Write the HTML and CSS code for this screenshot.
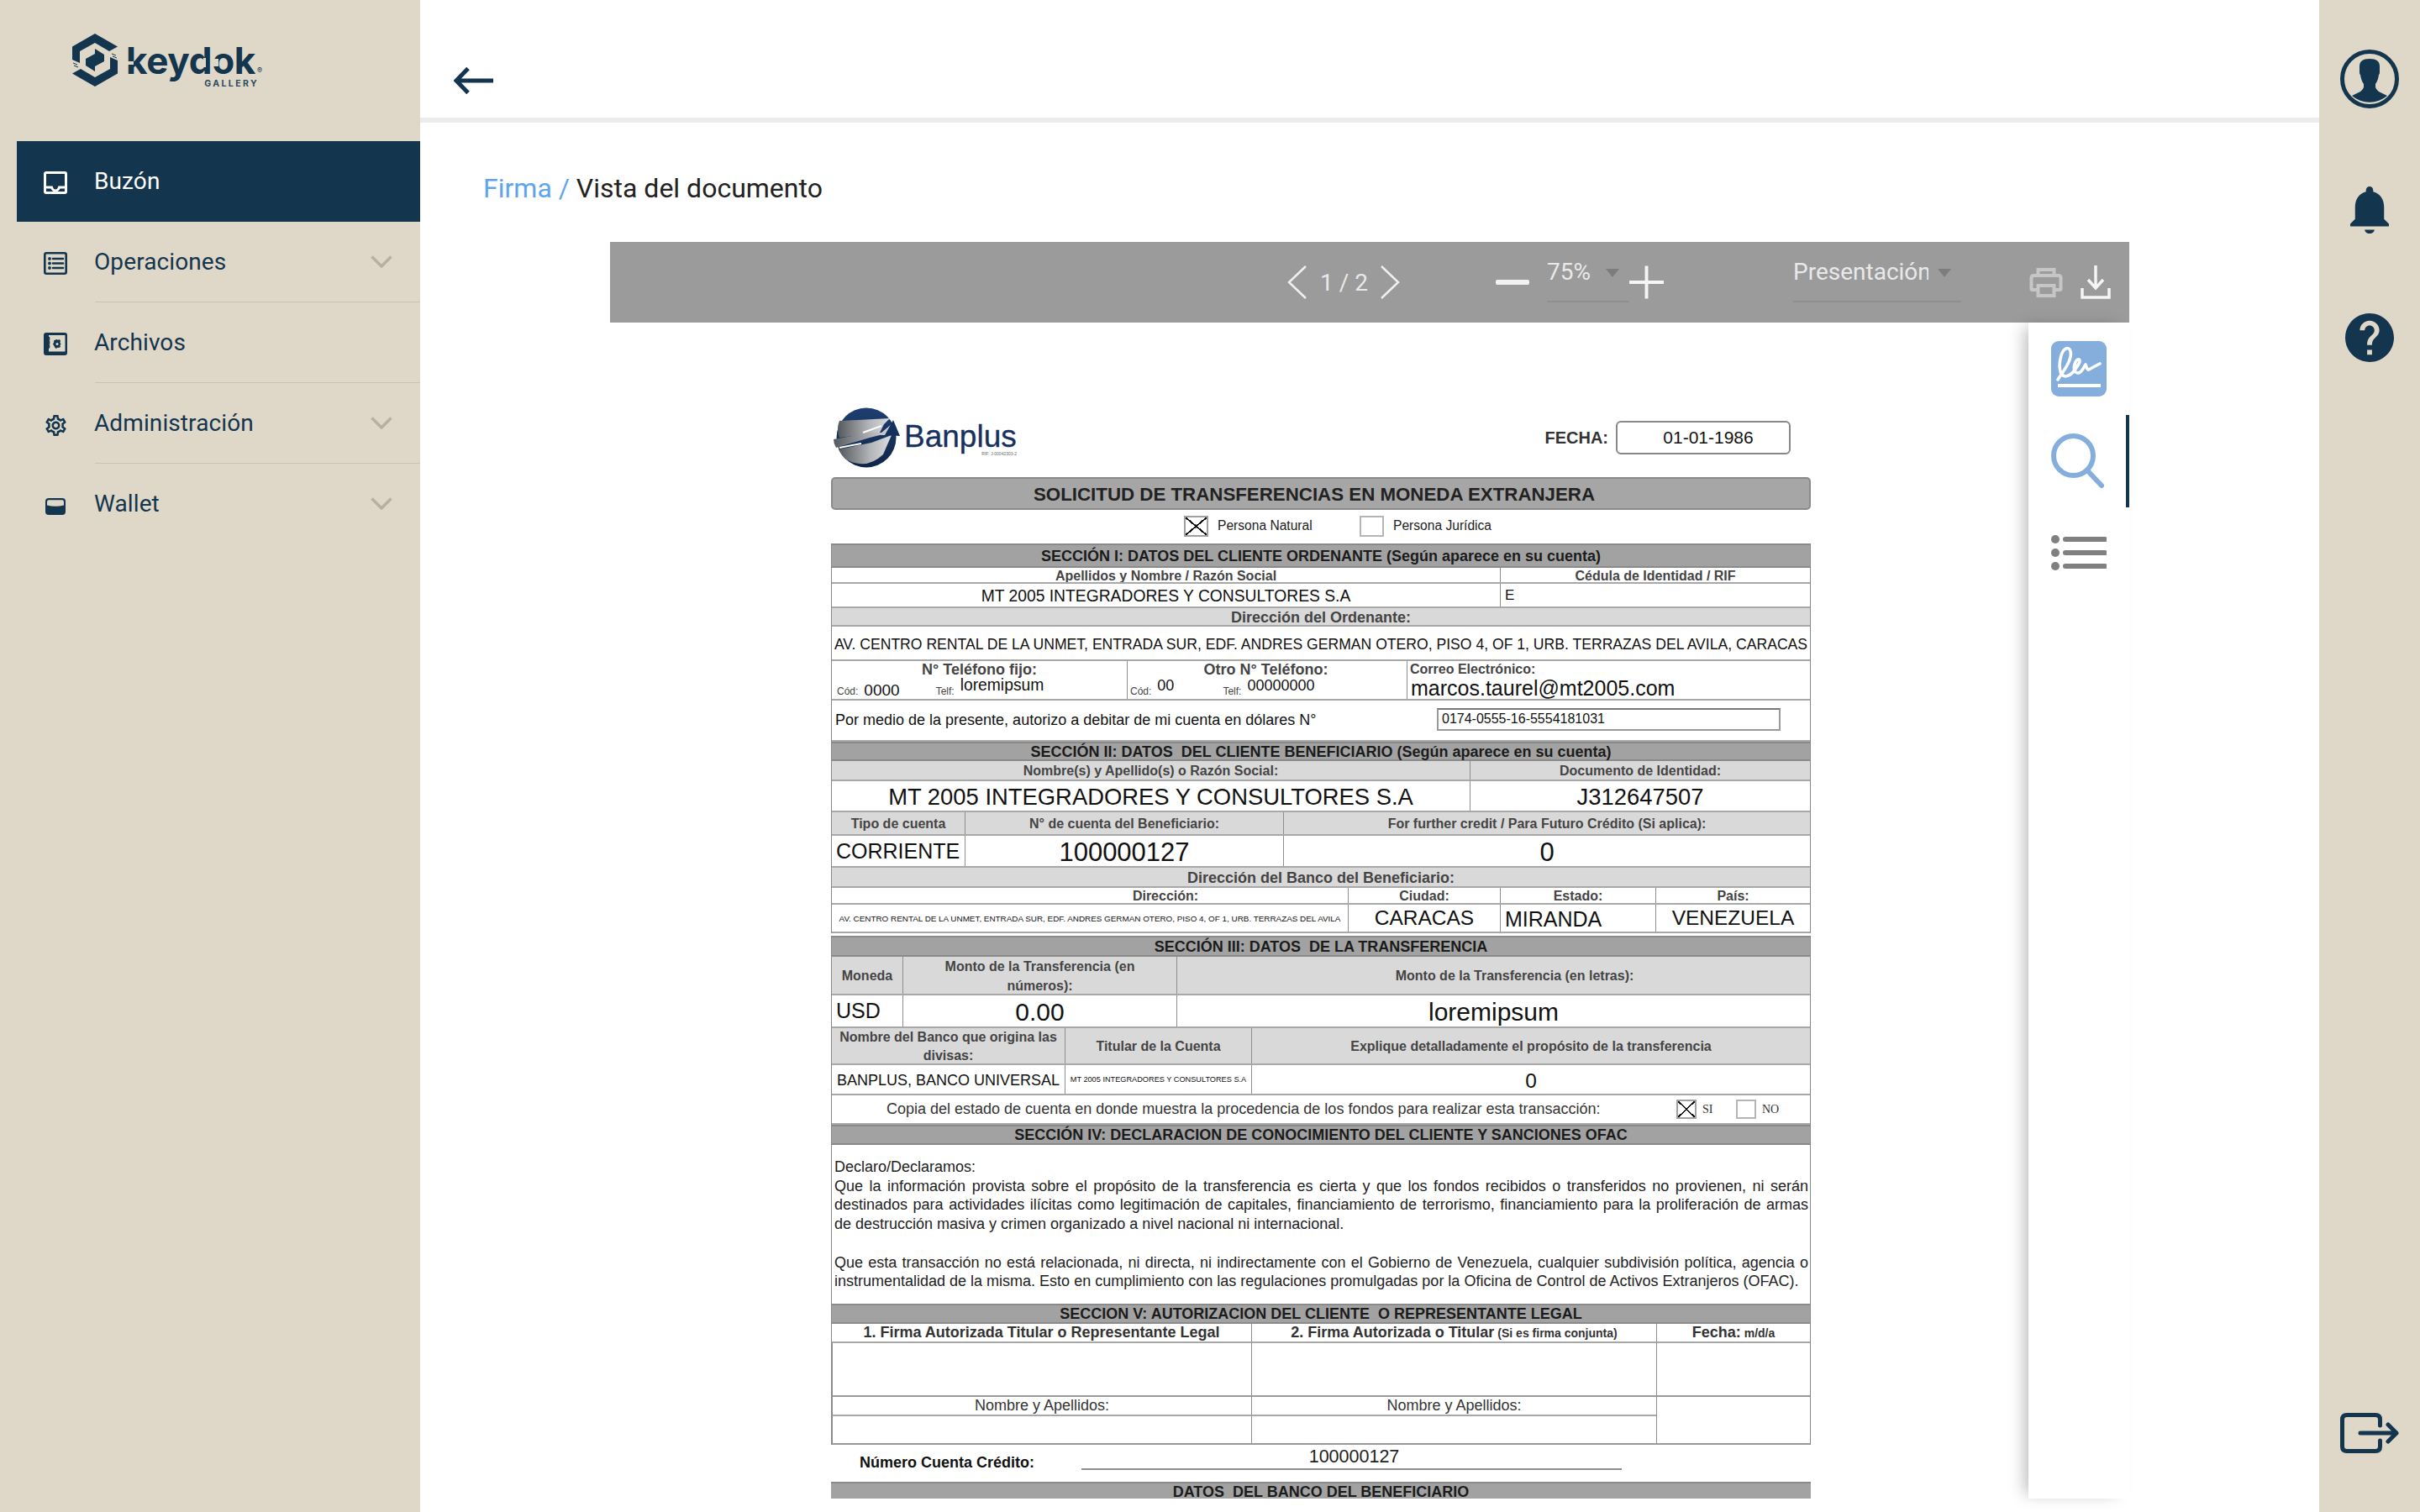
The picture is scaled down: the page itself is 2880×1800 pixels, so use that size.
FILE: index.html
```html
<!DOCTYPE html>
<html lang="es">
<head>
<meta charset="utf-8">
<title>Vista del documento</title>
<link rel="stylesheet" href="styles.css">
</head>
<body>
<div class="app">
  <aside class="sidebar">
    <div class="brand">
      <svg class="brand-mark" viewBox="0 0 54 63" aria-hidden="true">
        <path class="ink" d="M27 0 54 15.500 44 21 27 11 9 21V35L0 31V15.500Z"/>
        <path class="ink" d="M27 63 0 47.500 10 42 27 52 45 42V28L54 32V47.500Z"/>
        <path class="ink" d="M16 30 27 24V18L38 25V33L27 39V45L16 38Z"/>
        <path class="hatch" d="M1 35 6 37M2 38 7 40M47 24 52 26M48 27 53 29"/>
      </svg>
      <div class="brand-text">
        <div class="brand-name">keydok<span class="brand-reg">®</span><span class="slit slit-k"></span><span class="slit slit-d"></span><span class="slit slit-o"></span></div>
        <div class="brand-sub">GALLERY</div>
      </div>
    </div>
    <nav class="nav">
      <a class="nav-item active">
        <svg class="nav-icon" viewBox="0 0 28 27"><path class="line-w" d="M3 1.500H25Q26.500 1.500 26.500 3V24Q26.500 25.500 25 25.500H3Q1.500 25.500 1.500 24V3Q1.500 1.500 3 1.500Z"/><path class="line-w" d="M2 19H9.500Q10.500 23 14 23T18.500 19H26"/></svg>
        <span class="nav-label">Buzón</span>
      </a>
      <a class="nav-item">
        <svg class="nav-icon" viewBox="0 0 28 27"><rect class="line" x="1.300" y="1.300" width="25.400" height="24.400" rx="2"/><circle class="fill" cx="7" cy="8" r="1.900"/><circle class="fill" cx="7" cy="13.500" r="1.900"/><circle class="fill" cx="7" cy="19" r="1.900"/><path class="line" d="M11 8H23M11 13.500H23M11 19H23"/></svg>
        <span class="nav-label">Operaciones</span>
        <svg class="nav-chev" viewBox="0 0 26 15"><path d="M1.500 1.500 13 13 24.500 1.500"/></svg>
      </a>
      <a class="nav-item">
        <svg class="nav-icon" viewBox="0 0 28 27"><rect class="fill" width="28" height="27" rx="3"/><rect class="sand" x="6" y="3" width="19.500" height="19.500"/><path class="line" d="M6 8.500V6M6 13V10.500M6 17.500V15"/><path class="fill" d="M15.500 8 17 8.700 19 8 20 10 19.400 11.700 20.500 13.500 19.400 15.300 20 17 18 18 16.500 17.800 15 19 13.500 18 12.300 15.700 11 13.500 12.300 11.300 12 9.500 14 8.500Z"/><circle class="sand" cx="16" cy="13.500" r="1.500"/></svg>
        <span class="nav-label">Archivos</span>
      </a>
      <a class="nav-item">
        <svg class="nav-icon nav-gear" viewBox="2 2 20 20"><path class="fill" d="M19.430 12.980c.04-.32.07-.64.07-.98 0-.34-.03-.66-.07-.98l2.110-1.650c.19-.15.24-.42.12-.64l-2-3.460c-.09-.16-.26-.25-.44-.25-.06 0-.12.01-.17.03l-2.490 1c-.52-.4-1.080-.73-1.690-.98l-.38-2.650C14.460 2.180 14.250 2 14 2h-4c-.25 0-.46.18-.49.42l-.38 2.650c-.61.25-1.170.59-1.690.98l-2.490-1c-.06-.02-.12-.03-.18-.03-.17 0-.34.09-.43.25l-2 3.460c-.13.22-.07.49.12.64l2.110 1.650c-.04.32-.07.65-.07.98 0 .33.03.66.07.98l-2.110 1.650c-.19.15-.24.42-.12.64l2 3.460c.09.16.26.25.44.25.06 0 .12-.01.17-.03l2.490-1c.52.4 1.080.73 1.690.98l.38 2.650c.03.24.24.42.49.42h4c.25 0 .46-.18.49-.42l.38-2.650c.61-.25 1.170-.59 1.690-.98l2.490 1c.06.02.12.03.18.03.17 0 .34-.09.43-.25l2-3.460c.12-.22.07-.49-.12-.64l-2.110-1.650zm-1.980-1.710c.04.31.05.52.05.73 0 .21-.02.43-.05.73l-.14 1.130.89.7 1.080.84-.7 1.210-1.270-.51-1.040-.42-.9.68c-.43.32-.84.56-1.250.73l-1.060.43-.16 1.130-.2 1.350h-1.400l-.19-1.350-.16-1.130-1.060-.43c-.43-.18-.83-.41-1.230-.71l-.91-.7-1.060.43-1.270.51-.7-1.210 1.080-.84.89-.7-.14-1.130c-.03-.31-.05-.54-.05-.74s.02-.43.05-.73l.14-1.130-.89-.7-1.080-.84.7-1.210 1.270.51 1.040.42.9-.68c.43-.32.84-.56 1.250-.73l1.060-.43.16-1.130.2-1.350h1.390l.19 1.350.16 1.130 1.060.43c.43.18.83.41 1.230.71l.91.7 1.060-.43 1.270-.51.7 1.210-1.070.85-.89.7.14 1.130zM12 8c-2.210 0-4 1.790-4 4s1.790 4 4 4 4-1.790 4-4-1.790-4-4-4zm0 6c-1.100 0-2-.9-2-2s.9-2 2-2 2 .9 2 2-.9 2-2 2z"/></svg>
        <span class="nav-label">Administración</span>
        <svg class="nav-chev" viewBox="0 0 26 15"><path d="M1.500 1.500 13 13 24.500 1.500"/></svg>
      </a>
      <a class="nav-item">
        <svg class="nav-icon nav-wallet" viewBox="0 0 24 20"><path class="fill" d="M4 0H20Q24 0 24 4V16Q24 20 20 20H4Q0 20 0 16V4Q0 0 4 0Z"/><path class="sand" d="M4 2.200H20Q22 2.200 22 4.500V8.500Q12 11 2 8.500V4.500Q2 2.200 4 2.200Z"/></svg>
        <span class="nav-label">Wallet</span>
        <svg class="nav-chev" viewBox="0 0 26 15"><path d="M1.500 1.500 13 13 24.500 1.500"/></svg>
      </a>
    </nav>
  </aside>

  <main class="main">
    <header class="topbar">
      <svg class="back" viewBox="0 0 48 32"><path d="M47 16H3M17 1.500 3 16 17 30.500"/></svg>
    </header>
    <div class="crumbs"><span class="crumb-link">Firma /</span> <span class="crumb-here">Vista del documento</span></div>

    <section class="viewer">
      <div class="toolbar">
        <svg class="tb-prev" viewBox="0 0 23 40"><path d="M22 1 2 20 22 39"/></svg>
        <span class="tb-page">1 / 2</span>
        <svg class="tb-next" viewBox="0 0 23 40"><path d="M1 1 21 20 1 39"/></svg>
        <span class="tb-minus"></span>
        <div class="tb-select tb-zoom"><span class="tb-value">75%</span><span class="tb-caret"></span></div>
        <svg class="tb-plus" viewBox="0 0 42 40"><path d="M0 20H42M21 0V40"/></svg>
        <div class="tb-select tb-mode"><span class="tb-value tb-clip">Presentación</span><span class="tb-caret"></span></div>
        <svg class="tb-print" viewBox="0 0 39 35"><path d="M10 9V2H29V9M10 26H3Q2 26 2 25V12Q2 9 5 9H34Q37 9 37 12V25Q37 26 36 26H29M10 21H29V33H10Z"/></svg>
        <svg class="tb-down" viewBox="0 0 36 40"><path d="M18 0V26M9 17 18 27 27 17M2 27V38H34V27"/></svg>
      </div>

      <div class="viewer-body">
        <div class="doc-scroll">
          <article class="doc">
            <div class="doc-head">
              <div class="bank-logo">
                <svg class="bank-orb" viewBox="0 0 80 72">
                  <defs>
                    <linearGradient id="orbBlue" x1="0" y1="0" x2="0" y2="1"><stop offset="0" stop-color="#1f3f70"/><stop offset="1" stop-color="#0f2548"/></linearGradient>
                    <linearGradient id="orbGrey" x1="0" y1="0" x2="1" y2="0"><stop offset="0" stop-color="#55585c"/><stop offset=".6" stop-color="#b3b5b8"/><stop offset="1" stop-color="#dcdde0"/></linearGradient>
                  </defs>
                  <circle cx="40" cy="36" r="35.500" fill="url(#orbBlue)"/>
                  <path d="M8 16 68 13 61 20 56 30 8 36Q4 26 8 16Z" fill="url(#orbGrey)"/>
                  <path d="M1 38 44 30 58 30 70 20 78 33 56 33 44 36 4 48Q1 43 1 38Z" fill="url(#orbGrey)"/>
                  <path d="M7 50 46 42 70 33 60 56Q40 75 16 62Q10 57 7 50Z" fill="url(#orbGrey)"/>
                  <path d="M36 30 58 22M8 48 34 43" stroke="#fff" stroke-width="2" fill="none"/>
                  <path d="M72 15 80 34 62 33Z" fill="#14305f"/>
                </svg>
                <div class="bank-words">
                  <div class="bank-name">Banplus</div>
                  <div class="bank-rif">RIF: J-00042303-2</div>
                </div>
              </div>
              <div class="fecha"><span class="fecha-label">FECHA:</span><span class="fecha-box">01-01-1986</span></div>
            </div>
            <h1 class="doc-title">SOLICITUD DE TRANSFERENCIAS EN MONEDA EXTRANJERA</h1>
            <div class="persona">
              <span class="chk chk-x"></span><span class="persona-lbl">Persona Natural</span>
              <span class="chk"></span><span class="persona-lbl">Persona Jurídica</span>
            </div>

            <div class="frame">
              <h2 class="sec sec-1">SECCIÓN I: DATOS DEL CLIENTE ORDENANTE (Según aparece en su cuenta)</h2>
              <div class="row c-795 h-19"><div class="cell lab">Apellidos y Nombre / Razón Social</div><div class="cell lab">Cédula de Identidad / RIF</div></div>
              <div class="row c-795 h-29"><div class="cell val-19 low">MT 2005 INTEGRADORES Y CONSULTORES S.A</div><div class="cell val-17 left">E</div></div>
              <div class="row c-1 h-22 lab-row"><div class="cell lab lab-lg">Dirección del Ordenante:</div></div>
              <div class="row c-1 h-41"><div class="cell val-addr low">AV. CENTRO RENTAL DE LA UNMET, ENTRADA SUR, EDF. ANDRES GERMAN OTERO, PISO 4, OF 1, URB. TERRAZAS DEL AVILA, CARACAS</div></div>
              <div class="row c-phone h-47">
                <div class="cell phone">
                  <div class="lab phone-head">N° Teléfono fijo:</div>
                  <div class="phone-vals"><span class="tiny">Cód:</span><span class="pv pv-low">0000</span><span class="tiny t-1">Telf:</span><span class="pv pv-r">loremipsum</span></div>
                </div>
                <div class="cell phone phone-2">
                  <div class="lab phone-head">Otro N° Teléfono:</div>
                  <div class="phone-vals"><span class="tiny">Cód:</span><span class="pv pv-s">00</span><span class="tiny t-2">Telf:</span><span class="pv pv-s">00000000</span></div>
                </div>
                <div class="cell phone phone-mail">
                  <div class="lab phone-head mail-head">Correo Electrónico:</div>
                  <div class="mail">marcos.taurel@mt2005.com</div>
                </div>
              </div>
              <div class="row c-1 h-49"><div class="cell debit"><span class="debit-text">Por medio de la presente, autorizo a debitar de mi cuenta en dólares N°</span><span class="acct-box">0174-0555-16-5554181031</span></div></div>

              <h2 class="sec sec-2">SECCIÓN II: DATOS&nbsp; DEL CLIENTE BENEFICIARIO (Según aparece en su cuenta)</h2>
              <div class="row c-759 h-24 lab-row"><div class="cell lab">Nombre(s) y Apellido(s) o Razón Social:</div><div class="cell lab">Documento de Identidad:</div></div>
              <div class="row c-759 h-37"><div class="cell val-27 low">MT 2005 INTEGRADORES Y CONSULTORES S.A</div><div class="cell val-27 low">J312647507</div></div>
              <div class="row c-tipo h-28 lab-row"><div class="cell lab">Tipo de cuenta</div><div class="cell lab">N° de cuenta del Beneficiario:</div><div class="cell lab">For further credit / Para Futuro Crédito (Si aplica):</div></div>
              <div class="row c-tipo h-38"><div class="cell val-25 left">CORRIENTE</div><div class="cell val-31 low">100000127</div><div class="cell val-31 low">0</div></div>
              <div class="row c-1 h-24 lab-row"><div class="cell lab lab-lg">Dirección del Banco del Beneficiario:</div></div>
              <div class="row c-dir h-20"><div class="cell lab pad-dir">Dirección:</div><div class="cell lab">Ciudad:</div><div class="cell lab">Estado:</div><div class="cell lab">País:</div></div>
              <div class="row c-dir h-34"><div class="cell val-tiny">AV. CENTRO RENTAL DE LA UNMET, ENTRADA SUR, EDF. ANDRES GERMAN OTERO, PISO 4, OF 1, URB. TERRAZAS DEL AVILA</div><div class="cell val-24">CARACAS</div><div class="cell val-25 left low">MIRANDA</div><div class="cell val-24">VENEZUELA</div></div>
            </div>

            <div class="frame frame-3">
              <h2 class="sec sec-3">SECCIÓN III: DATOS&nbsp; DE LA TRANSFERENCIA</h2>
              <div class="row c-mon h-46 lab-row"><div class="cell lab">Moneda</div><div class="cell lab wrap">Monto de la Transferencia (en números):</div><div class="cell lab pad-let">Monto de la Transferencia (en letras):</div></div>
              <div class="row c-mon h-39"><div class="cell val-25 left">USD</div><div class="cell val-30 low">0.00</div><div class="cell val-30 low">loremipsum</div></div>
              <div class="row c-ban h-44 lab-row"><div class="cell lab wrap">Nombre del Banco que origina las divisas:</div><div class="cell lab">Titular de la Cuenta</div><div class="cell lab">Explique detalladamente el propósito de la transferencia</div></div>
              <div class="row c-ban h-36"><div class="cell val-18 low">BANPLUS, BANCO UNIVERSAL</div><div class="cell val-holder">MT 2005 INTEGRADORES Y CONSULTORES S.A</div><div class="cell val-24 low">0</div></div>
              <div class="row c-1 h-35"><div class="cell copia"><span class="copia-text">Copia del estado de cuenta en donde muestra la procedencia de los fondos para realizar esta transacción:</span><span class="chk chk-x chk-sm"></span><span class="copia-opt">SI</span><span class="chk chk-sm"></span><span class="copia-opt">NO</span></div></div>

              <h2 class="sec sec-4">SECCIÓN IV: DECLARACION DE CONOCIMIENTO DEL CLIENTE Y SANCIONES OFAC</h2>
              <div class="decl">
                <p>Declaro/Declaramos:</p>
                <p class="just">Que la información provista sobre el propósito de la transferencia es cierta y que los fondos recibidos o transferidos no provienen, ni serán destinados para actividades ilícitas como legitimación de capitales, financiamiento de terrorismo, financiamiento para la proliferación de armas de destrucción masiva y crimen organizado a nivel nacional ni internacional.</p>
                <p class="just gap">Que esta transacción no está relacionada, ni directa, ni indirectamente con el Gobierno de Venezuela, cualquier subdivisión política, agencia o instrumentalidad de la misma. Esto en cumplimiento con las regulaciones promulgadas por la Oficina de Control de Activos Extranjeros (OFAC).</p>
              </div>

              <h2 class="sec sec-5">SECCION V: AUTORIZACION DEL CLIENTE&nbsp; O REPRESENTANTE LEGAL</h2>
              <div class="signs">
                <div class="cell sign-h">1. Firma Autorizada Titular o Representante Legal</div>
                <div class="cell sign-h">2. Firma Autorizada o Titular <small class="sign-small">(Si es firma conjunta)</small></div>
                <div class="cell sign-h">Fecha: <small class="sign-small">m/d/a</small></div>
                <div class="cell sign-blank"></div><div class="cell sign-blank"></div><div class="cell sign-blank"></div>
                <div class="cell sign-name">Nombre y Apellidos:</div><div class="cell sign-name">Nombre y Apellidos:</div>
                <div class="cell sign-span"></div>
                <div class="cell sign-last"></div><div class="cell sign-last"></div>
              </div>
            </div>

            <div class="credit">
              <span class="credit-label">Número Cuenta Crédito:</span>
              <span class="credit-value">100000127</span>
            </div>
            <h2 class="sec sec-6">DATOS&nbsp; DEL BANCO DEL BENEFICIARIO</h2>
          </article>
        </div>

        <aside class="tools">
          <svg class="tool-sign" viewBox="0 0 66 66"><rect class="tool-bg" width="66" height="66" rx="9"/><path class="tool-pen" d="M8 46C13 38 26 22 23 12 21 6 15 8 12 17 9 28 9 41 17 42 24 42 29 34 33 27 36 21 32 20 29 25 26 31 27 38 32 38 37 38 39 30 41 28 42 31 43 35 45 34 48 32 52 30 58 27"/><rect class="tool-rule" x="8" y="51" width="51" height="4"/></svg>
          <div class="tool-active">
            <svg class="tool-search" viewBox="0 0 63 66"><circle class="tool-ln" cx="26.500" cy="26.500" r="23.500"/><path class="tool-ln" d="M43 44 60 62"/></svg>
          </div>
          <svg class="tool-list" viewBox="0 0 66 42"><circle class="tl-dot" cx="5" cy="5" r="5"/><circle class="tl-dot" cx="5" cy="21" r="5"/><circle class="tl-dot" cx="5" cy="37" r="5"/><path class="tl-line" d="M17 5H64M17 21H64M17 37H64"/></svg>
        </aside>
      </div>
    </section>
  </main>

  <aside class="railbar">
    <svg class="rail-user" viewBox="0 0 70 70"><circle class="rail-ring" cx="35" cy="35" r="32.500"/><path class="rail-fill" d="M23 20Q23 11 35 11T47 20V27Q47 30 46 30 45 37 42 41V45Q44 50 50 52L56 55A32 32 0 0 1 14 55L20 52Q26 50 28 45V41Q25 37 24 30 23 30 23 27Z"/></svg>
    <svg class="rail-bell" viewBox="4 2.500 16 19.500"><path class="rail-fill" d="M12 22c1.100 0 2-.7 2-1.600h-4c0 .9.890 1.600 2 1.600zm6-6v-5c0-3.070-1.640-5.640-4.500-6.320V4c0-.83-.67-1.500-1.500-1.500s-1.500.67-1.500 1.500v.68C7.630 5.360 6 7.920 6 11v5l-2 2v1h16v-1l-2-2z"/></svg>
    <svg class="rail-help" viewBox="2 2 20 20"><path class="rail-fill" d="M12 2C6.480 2 2 6.480 2 12s4.480 10 10 10 10-4.480 10-10S17.520 2 12 2zm1 17h-2v-2h2v2zm2.070-7.750l-.9.920C13.450 12.900 13 13.500 13 15h-2v-.5c0-1.100.45-2.100 1.170-2.830l1.240-1.260c.37-.36.59-.86.59-1.410 0-1.100-.9-2-2-2s-2 .9-2 2H8c0-2.210 1.790-4 4-4s4 1.790 4 4c0 .88-.36 1.680-.93 2.250z"/></svg>
    <svg class="rail-exit" viewBox="0 0 70 48"><path d="M47.500 15V8Q47.500 2.500 42 2.500H8Q2.500 2.500 2.500 8V40Q2.500 45.500 8 45.500H42Q47.500 45.500 47.500 40V33M24 24H67M57 14 67 24 57 34"/></svg>
  </aside>
</div>
</body>
</html>
```

FILE: styles.css
```css
* { box-sizing: border-box; }
html, body { margin: 0; padding: 0; background: #fff; }
body { font-family: Roboto, "Liberation Sans", sans-serif; width: 2880px; height: 1800px; overflow: hidden; }
.app { display: flex; width: 2880px; height: 1800px; }

/* Left sidebar */
.sidebar { width: 500px; flex: none; background: #dfd8c9; padding-top: 40px; }
.brand { display: flex; height: 128px; padding-left: 86px; gap: 10px; align-items: flex-start; }
.brand-mark { width: 54px; height: 63px; flex: none; }
.ink { fill: #14354e; }
.hatch { fill: none; stroke: #14354e; stroke-width: 1; }
.sand { fill: #dfd8c9; }
.brand-text { display: flex; flex-direction: column; align-items: flex-end; width: 155px; margin-top: 9px; }
.brand-name { font-family: Inter, sans-serif; font-weight: 700; font-size: 44px; line-height: 46px; letter-spacing: -0.300px; color: #14354e; position: relative; align-self: flex-start; }
.brand-reg { font-size: 9px; line-height: 10px; position: absolute; left: 100%; bottom: 6px; margin-left: 2px; font-weight: 400; }
.slit { position: absolute; background: #dfd8c9; }
.slit-k { left: 0; top: 24px; width: 9px; height: 4px; }
.slit-d { left: 92px; top: 20px; width: 3px; height: 11px; }
.slit-o { left: 102px; top: 21px; width: 8px; height: 9px; }
.brand-sub { font-family: Inter, sans-serif; font-weight: 700; font-size: 10.500px; line-height: 10px; letter-spacing: 2.400px; color: #2b4a61; margin-right: -3px; }

.nav { margin-left: 20px; }
.nav-item { display: flex; align-items: center; height: 96px; padding-left: 32px; color: #14354e; position: relative; }
.nav-item:not(.active)::after { content: ""; position: absolute; left: 93px; right: 0; bottom: 0; height: 1px; background: #c9c3b6; }
.nav-item:last-child::after { display: none; }
.nav-item.active { background: #14354e; color: #fff; }
.nav-icon { width: 28px; height: 27px; flex: none; margin-top: 2px; }
.nav-gear { height: 25px; width: 25px; margin: 4px 1px 0 2px; }
.nav-wallet { width: 24px; height: 20px; margin: 6px 2px 0 2px; }
.line, .line-w { fill: none; stroke: #14354e; stroke-width: 2.600; stroke-linecap: round; }
.line-w { stroke: #fff; stroke-width: 3; }
.fill { fill: #14354e; }
.nav-label { margin-left: 32px; font-size: 28px; letter-spacing: 0.100px; flex: 1; margin-top: -2px; }
.nav-chev { width: 26px; height: 15px; margin-right: 33px; fill: none; stroke: #b7b0a3; stroke-width: 3.500; margin-top: -1px; }

/* Main */
.main { flex: 1; min-width: 0; display: flex; flex-direction: column; }
.topbar { height: 146px; flex: none; border-bottom: 6px solid #ececec; padding: 80px 0 0 40px; }
.back { display: block; width: 48px; height: 32px; fill: none; stroke: #14354e; stroke-width: 5; }
.crumbs { height: 142px; flex: none; padding: 59px 0 0 75px; font-size: 32px; line-height: 38px; }
.crumb-link { color: #5ea4ef; }
.crumb-here { color: #222; }

/* Viewer */
.viewer { width: 1808px; margin-left: 226px; flex: none; }
.toolbar { height: 96px; background: #9b9b9b; display: flex; align-items: center; color: #e9e9e9; font-size: 28px; }
.tb-prev, .tb-next { width: 23px; height: 40px; flex: none; fill: none; stroke: #f0f0f0; stroke-width: 2.500; }
.tb-prev { margin-left: 806px; }
.tb-page { width: 56px; margin-left: 16px; white-space: nowrap; }
.tb-next { margin-left: 16px; }
.tb-minus { width: 40px; height: 6px; background: #f2f2f2; border-radius: 2px; margin-left: 114px; flex: none; }
.tb-select { display: flex; align-items: flex-start; height: 54px; margin-top: -6px; border-bottom: 2px solid #8f8f8f; line-height: 36px; flex: none; }
.tb-zoom { width: 98px; margin-left: 21px; }
.tb-mode { width: 200px; margin-left: 154px; }
.tb-clip { width: 161px; overflow: hidden; white-space: nowrap; }
.tb-caret { width: 0; height: 0; border-left: 8px solid transparent; border-right: 8px solid transparent; border-top: 10px solid #7d7d7d; margin: 14px 0 0 18px; }
.tb-mode .tb-caret { margin-left: 11px; }
.tb-plus { width: 41px; height: 40px; flex: none; fill: none; stroke: #f5f5f5; stroke-width: 4; }
.tb-print { width: 40px; height: 35px; margin-left: 81px; flex: none; fill: none; stroke: #c6c6c6; stroke-width: 4; }
.tb-down { width: 36px; height: 40px; margin-left: 21px; flex: none; fill: none; stroke: #f5f5f5; stroke-width: 3.500; }

.viewer-body { display: flex; height: 1400px; }
.doc-scroll { flex: 1; min-width: 0; height: 1400px; overflow: hidden; padding-left: 263px; }
.tools { width: 120px; flex: none; background: #fff; box-shadow: -10px 0 18px -6px rgba(0,0,0,.28); display: flex; flex-direction: column; padding: 22px 0 0 27px; position: relative; }
.tool-sign { width: 66px; height: 66px; display: block; }
.tool-bg { fill: #85aedd; }
.tool-pen { fill: none; stroke: #fff; stroke-width: 3.600; stroke-linecap: round; stroke-linejoin: round; }
.tool-rule { fill: #fff; }
.tool-active { margin-top: 22px; height: 110px; padding-top: 22px; border-right: 4px solid #14354e; }
.tool-search { display: block; width: 63px; height: 66px; }
.tool-ln { fill: none; stroke: #85aedd; stroke-width: 6; stroke-linecap: round; }
.tool-list { display: block; width: 66px; height: 42px; margin-top: 33px; }
.tl-dot { fill: #808080; }
.tl-line { fill: none; stroke: #808080; stroke-width: 6; stroke-linecap: round; }

/* Document */
.doc { width: 1166px; font-family: "Liberation Sans", Arial, sans-serif; color: #111; }
.doc-head { height: 184px; display: flex; justify-content: space-between; padding: 101px 24px 0 2px; }
.bank-logo { display: flex; height: 72px; }
.bank-orb { width: 80px; height: 72px; flex: none; }
.bank-words { margin-left: 5px; width: 136px; }
.bank-name { font-size: 37px; line-height: 40px; color: #16305f; margin-top: 15px; -webkit-text-stroke: 0.300px #16305f; }
.bank-rif { font-size: 5px; line-height: 6px; color: #666; text-align: right; margin-top: -3px; padding-right: 2px; }
.fecha { display: flex; align-items: center; height: 40px; margin-top: 16px; }
.fecha-label { font-size: 20px; font-weight: 700; color: #333; margin-right: 9px; }
.fecha-box { width: 208px; height: 40px; border: 2px solid #888; border-radius: 6px; display: flex; align-items: center; justify-content: center; font-size: 21px; color: #111; padding-left: 12px; }
.doc-title { margin: 0; height: 39px; background: #a6a6a6; border: 2px solid #8a8a8a; border-radius: 5px; font-size: 22.300px; line-height: 38px; text-align: center; font-weight: 700; color: #222; padding-right: 16px; }
.persona { height: 40px; display: flex; align-items: center; padding: 0 0 2px 420px; font-size: 15.600px; color: #222; }
.chk { width: 29px; height: 25px; border: 2px solid #b5b5b5; flex: none; display: block; }
.chk-x { background: linear-gradient(to top right, transparent 47%, #111 47%, #111 53%, transparent 53%), linear-gradient(to top left, transparent 47%, #111 47%, #111 53%, transparent 53%); border-color: #a0a0a0; }
.persona-lbl { margin-left: 11px; width: 169px; white-space: nowrap; }
.frame { border-left: 1px solid #888; border-right: 1px solid #888; }
.frame-3 { margin-top: 3px; }
.sec { margin: 0; font-weight: 700; font-size: 18px; text-align: center; color: #1b1b1b; background: #a2a2a2; border-top: 2px solid #8a8a8a; border-bottom: 2px solid #8a8a8a; display: flex; align-items: center; justify-content: center; white-space: nowrap; padding-top: 1px; }
.sec-1 { height: 29px; }
.sec-2 { height: 23px; }
.sec-3 { height: 25px; }
.sec-4 { height: 24px; }
.sec-5 { height: 24px; }
.sec-6 { height: 22px; border-bottom: 0; }
.row { display: grid; border-bottom: 2px solid #a8a8a8; }
.c-1 { grid-template-columns: 1fr; }
.c-795 { grid-template-columns: 795px 1fr; }
.c-phone { grid-template-columns: 351px 333px 1fr; }
.c-759 { grid-template-columns: 759px 1fr; }
.c-tipo { grid-template-columns: 158px 379px 1fr; }
.c-dir { grid-template-columns: 614px 181px 185px 1fr; }
.c-mon { grid-template-columns: 84px 326px 1fr; }
.c-ban { grid-template-columns: 277px 222px 1fr; }
.h-19 { height: 19px; } .h-20 { height: 20px; } .h-22 { height: 22px; } .h-24 { height: 24px; }
.h-28 { height: 28px; } .h-29 { height: 29px; } .h-34 { height: 34px; } .h-35 { height: 35px; }
.h-36 { height: 36px; } .h-37 { height: 37px; } .h-38 { height: 38px; } .h-39 { height: 39px; }
.h-41 { height: 41px; } .h-44 { height: 44px; } .h-46 { height: 46px; } .h-47 { height: 47px; } .h-49 { height: 49px; }
.lab-row { background: #d9d9d9; }
.cell { display: flex; align-items: center; justify-content: center; text-align: center; border-left: 1px solid #8e8e8e; min-width: 0; white-space: nowrap; overflow: hidden; }
.cell:first-child { border-left: 0; }
.left { justify-content: flex-start; padding-left: 5px; }
.low { padding-top: 3px; }
.lab { font-size: 16px; font-weight: 700; color: #444; padding-top: 2px; }
.lab-lg { font-size: 18px; }
.pad-dir { padding-left: 180px; }
.pad-let { padding-left: 50px; }
.wrap { white-space: normal; line-height: 23px; }
.c-mon .wrap { padding: 2px 40px 0; }
.c-ban .wrap { padding: 2px 4px 0; line-height: 22px; }
.val-17 { font-size: 17px; }
.val-18 { font-size: 18px; }
.val-19 { font-size: 19.300px; }
.val-24 { font-size: 24.500px; }
.val-25 { font-size: 25px; }
.val-27 { font-size: 27.400px; }
.val-30 { font-size: 30px; }
.val-31 { font-size: 31px; }
.val-addr { font-size: 17.600px; }
.val-tiny { font-size: 9.900px; }
.val-holder { font-size: 9.200px; }
.phone { flex-direction: column; align-items: stretch; justify-content: flex-start; text-align: center; padding: 1px 6px 0; overflow: visible; }
.phone-2 { padding-left: 3px; }
.phone-head { font-size: 18px; line-height: 18px; padding-top: 0; }
.mail-head { font-size: 16px; }
.phone-vals { display: flex; align-items: center; height: 24px; text-align: left; margin-top: 1px; }
.tiny { font-size: 12px; color: #444; margin-right: 7px; margin-top: 8px; }
.pv { font-size: 19px; }
.pv-low { margin-top: 6px; }
.pv-r { margin-bottom: 6px; font-size: 19.300px; }
.pv-s { margin-bottom: 6px; font-size: 18px; }
.t-1 { margin-left: 43px; }
.t-2 { margin-left: 58px; }
.phone-mail { text-align: left; padding-left: 3px; }
.mail { font-size: 25px; line-height: 26px; padding-left: 1px; }
.debit { justify-content: flex-start; padding: 0 0 0 4px; font-size: 18px; align-items: flex-start; }
.debit-text { width: 716px; text-align: left; margin-top: 13px; }
.acct-box { width: 409px; height: 27px; border: 2px solid #9a9a9a; border-top-color: #777; font-size: 16px; text-align: left; padding: 2px 0 0 4px; margin-top: 9px; }
.copia { font-size: 18px; color: #333; justify-content: flex-start; padding-left: 65px; }
.copia-text { width: 940px; text-align: left; }
.chk-sm { width: 24px; height: 23px; }
.copia-opt { font-family: "Liberation Serif", serif; font-size: 14px; margin-left: 7px; width: 40px; text-align: left; flex: none; }
.decl { height: 189px; padding: 15px 2px 0 3px; font-size: 18px; line-height: 22.700px; color: #222; }
.decl p { margin: 0; }
.just { text-align: justify; }
.decl .gap { margin-top: 22.700px; }
.signs { display: grid; grid-template-columns: 499px 482px 1fr; grid-template-rows: 23px 64px 23px 32px; border-bottom: 2px solid #999; }
.sign-h { font-size: 18px; font-weight: 700; color: #333; border-bottom: 2px solid #a8a8a8; }
.sign-small { font-size: 14px; margin-left: 4px; }
.sign-blank { border-bottom: 2px solid #9a9a9a; }
.sign-name { font-size: 18px; color: #333; border-bottom: 2px solid #a8a8a8; }
.sign-span { grid-column: 3; grid-row: 3 / span 2; }
.credit { height: 44px; display: flex; padding-left: 34px; }
.credit-label { width: 264px; font-size: 18px; font-weight: 700; line-height: 42px; }
.credit-value { width: 643px; height: 30px; border-bottom: 2px solid #8d8d8d; font-size: 21.500px; text-align: center; line-height: 28px; padding-left: 6px; color: #222; }

/* Right rail */
.railbar { width: 120px; flex: none; background: #dfd8c9; display: flex; flex-direction: column; align-items: center; padding-top: 59px; }
.rail-ring { fill: none; stroke: #14354e; stroke-width: 5; }
.rail-fill { fill: #14354e; }
.rail-user { width: 70px; height: 70px; flex: none; }
.rail-bell { width: 46px; height: 56px; margin-top: 93px; flex: none; }
.rail-help { width: 58px; height: 58px; margin-top: 95px; flex: none; }
.rail-exit { width: 70px; height: 48px; margin-top: auto; margin-bottom: 70px; flex: none; fill: none; stroke: #14354e; stroke-width: 5; stroke-linecap: round; stroke-linejoin: round; }
```
